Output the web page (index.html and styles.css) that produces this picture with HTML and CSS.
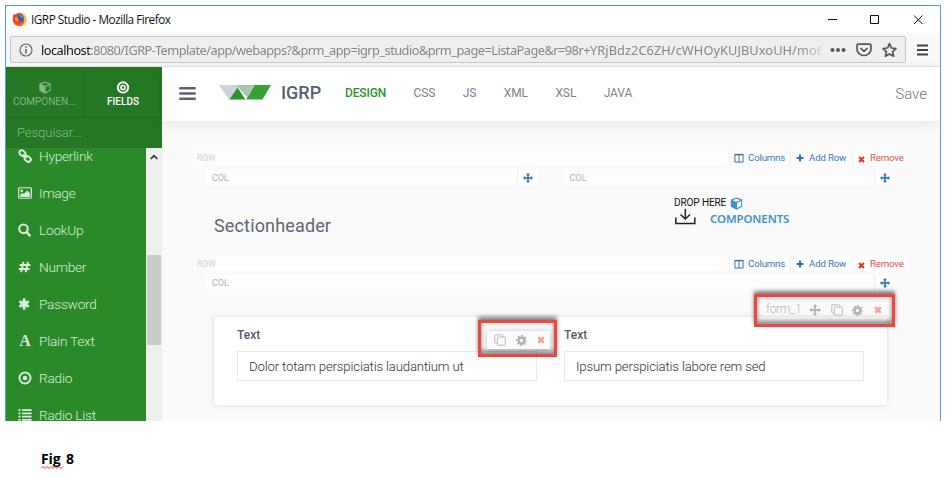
FILE: index.html
```html
<!DOCTYPE html>
<html lang="en">
<head>
<meta charset="utf-8">
<title>IGRP Studio</title>
<link rel="stylesheet" href="styles.css">
</head>
<body>
<svg class="defs" aria-hidden="true">
  <symbol id="cube" viewBox="0 0 16 16"><path fill="currentColor" fill-rule="evenodd" d="M8 .5 15 3.2V12L8 15.7 1 12V3.200zM8 2 3.200 3.900 8 5.800l4.800-1.900zM8.700 7.200v6.400l5-2.600V5.200z"/></symbol>
  <symbol id="target" viewBox="0 0 16 16"><circle cx="8" cy="8" r="6.300" fill="none" stroke="currentColor" stroke-width="2.200"/><circle cx="8" cy="8" r="2.600" fill="currentColor"/></symbol>
  <symbol id="ring" viewBox="0 0 16 16"><circle cx="8" cy="8" r="6.400" fill="none" stroke="currentColor" stroke-width="2.400"/><circle cx="8" cy="8" r="2.500" fill="none" stroke="currentColor" stroke-width="2"/></symbol>
  <symbol id="bars" viewBox="0 0 16 16"><path fill="none" stroke="currentColor" stroke-width="2.300" stroke-linecap="round" d="M1.200 3h13.600M1.200 8h13.600M1.200 13h13.600"/></symbol>
  <symbol id="move" viewBox="0 0 16 16"><path fill="currentColor" d="M8 0l3.200 3.500H9.200v3.300h3.300v-2L16 8l-3.500 3.200v-2H9.200v3.300h2L8 16l-3.200-3.500h2V9.200H3.500v2L0 8l3.500-3.200v2h3.300V3.500h-2z"/></symbol>
  <symbol id="copy" viewBox="0 0 16 16"><g fill="none" stroke="currentColor" stroke-width="1.200"><rect x="4.600" y="4" width="10.400" height="11" rx="1"/><path d="M4.600 12H2a1 1 0 0 1-1-1V2a1 1 0 0 1 1-1h8.500a1 1 0 0 1 1 1v2"/></g></symbol>
  <symbol id="gear" viewBox="0 0 16 16"><circle cx="8" cy="8" r="4.200" fill="none" stroke="currentColor" stroke-width="3.600"/><circle cx="8" cy="8" r="6.600" fill="none" stroke="currentColor" stroke-width="2.600" stroke-dasharray="2.900 2.284" stroke-dashoffset="1.450"/></symbol>
  <symbol id="cross" viewBox="0 0 16 16"><path fill="none" stroke="currentColor" stroke-width="5" d="M2.500 2.500l11 11M13.500 2.500l-11 11"/></symbol>
  <symbol id="plus" viewBox="0 0 16 16"><path fill="none" stroke="currentColor" stroke-width="4" d="M8 1v14M1 8h14"/></symbol>
  <symbol id="columns" viewBox="0 0 16 16"><path fill="none" stroke="currentColor" stroke-width="1.500" d="M1.500 2.500h13v12h-13zM8 2.500v12"/><path stroke="currentColor" stroke-width="2.200" d="M1 2.500h14"/></symbol>
</svg>

<main class="window">
  <header class="titlebar">
    <svg class="firefox" viewBox="0 0 16 16"><circle cx="8" cy="8" r="7.300" fill="#f05a28"/><path fill="#ffbd2f" d="M10 .8c3 1 5.600 4 5.300 7.700C15 12.600 11.700 15.400 8 15.400c3.800-1.500 5.500-4 5-7C12.600 5.500 10.500 4 10 .8z"/><circle cx="8.300" cy="7" r="4.300" fill="#3157b7"/><path fill="#2ba6df" d="M7 2.800c3 0 4.700 1.600 5 4L9.500 6z"/><path fill="#f23b31" d="M1 3.500 3 2l.8 2 3 .6L6 6.600l2 1.700-1.300 1.500 4.700-.6c-1 3-4.300 4.200-6.700 2.800C1.500 10.500.2 7 1 3.500z"/><path fill="#ff9524" d="M3 5.500 6.500 5 5.500 7l2 1.500-2 1.400C3.600 9.800 2.500 8 3 5.500z"/></svg>
    <span class="window-title">IGRP Studio - Mozilla Firefox</span>
    <svg class="controls" viewBox="0 0 102 12"><g fill="none" stroke="#111"><path d="M3 5.500h9M45.500 1.500h8v8h-8zM89 1.500l8.500 8.500M97.500 1.500l-8.500 8.500"/></g></svg>
  </header>
  <div class="toolbar">
    <div class="urlbar">
      <svg class="info" viewBox="0 0 14 14"><circle cx="7" cy="7" r="6" fill="none" stroke="#666" stroke-width="1.200"/><path stroke="#666" stroke-width="1.600" d="M7 6v4.500M7 3.200v1.600"/></svg>
      <div class="url"><b>localhost</b>:8080/IGRP-Template/app/webapps?&amp;prm_app=igrp_studio&amp;prm_page=ListaPage&amp;r=98r+<span class="token">YRjBdz2C6ZH/cWHOyKUJBUxoUH/mo6</span></div>
      <svg class="url-icons" viewBox="0 0 68 16"><g fill="#555"><circle cx="2.500" cy="8" r="2"/><circle cx="8" cy="8" r="2"/><circle cx="13.500" cy="8" r="2"/></g><g fill="none" stroke="#555" stroke-width="1.700" stroke-linejoin="round" stroke-linecap="round"><path d="M28.500 2.200h11q1.500 0 1.500 1.500V7a7 6.500 0 0 1-14 0V3.700q0-1.500 1.500-1.500zM31 6.500l3 2.800 3-2.800"/><path d="M59.500 1.700l1.900 4.300 4.600.5-3.400 3.100 1 4.700-4.100-2.400-4.100 2.400 1-4.700L53 6.500l4.600-.5z"/></g></svg>
    </div>
    <svg class="menu" viewBox="0 0 12 12"><path stroke="#444" stroke-width="1.800" d="M0 1.500h11M0 6h11M0 10.500h11"/></svg>
  </div>

  <div class="app">
    <aside class="sidebar">
      <nav class="tabs">
        <a class="tab"><svg><use href="#cube"/></svg><span>COMPONEN...</span></a>
        <a class="tab active"><svg><use href="#ring"/></svg><span>FIELDS</span></a>
      </nav>
      <div class="search">Pesquisar...</div>
      <div class="list-area">
        <ul class="fields">
          <li><svg viewBox="0 0 16 16"><g fill="none" stroke="currentColor" stroke-width="2.200"><rect x="1.300" y="2" width="7.500" height="5.400" rx="2.500" transform="rotate(42 5 4.700)"/><rect x="7.400" y="8.500" width="7.500" height="5.400" rx="2.500" transform="rotate(42 11 11.200)"/><path d="M6 6l4 4"/></g></svg>Hyperlink</li>
          <li><svg viewBox="0 0 16 16"><rect x=".8" y="2" width="14.400" height="12" rx="1" fill="none" stroke="currentColor" stroke-width="1.400"/><circle cx="4.300" cy="5.500" r="1.500" fill="currentColor"/><path fill="currentColor" d="M2.500 12.500v-2.300L5 7.700l1.500 1.500 4-4 3 3v4.300z"/></svg>Image</li>
          <li><svg viewBox="0 0 16 16"><circle cx="6.300" cy="6.700" r="4.900" fill="none" stroke="currentColor" stroke-width="2.300"/><path stroke="currentColor" stroke-width="2.800" stroke-linecap="round" d="M10.300 10.800l3 3.300"/></svg>LookUp</li>
          <li><svg viewBox="0 0 16 16"><path fill="none" stroke="currentColor" stroke-width="2.200" d="M6.200 2 3.600 14M11.400 2 8.800 14M1.800 5.700h12.400M.8 10.300h12.400"/></svg>Number</li>
          <li><svg viewBox="0 0 16 16"><path stroke="currentColor" stroke-width="3.300" stroke-linecap="round" d="M7 3v10M2.800 5.600l8.400 4.800M11.200 5.600l-8.400 4.800"/></svg>Password</li>
          <li><i class="letter">A</i>Plain Text</li>
          <li><svg><use href="#target"/></svg>Radio</li>
          <li><svg viewBox="0 0 16 16"><path fill="none" stroke="currentColor" stroke-width="2" d="M.5 2.500h2.500M4.500 2.500h11M.5 6.200h2.500M4.500 6.200h11M.5 9.900h2.500M4.500 9.900h11M.5 13.600h2.500M4.500 13.600h11"/></svg>Radio List</li>
        </ul>
        <div class="scrollbar"><svg class="arrow" viewBox="0 0 8 6"><path fill="none" stroke="#333" stroke-width="1.700" d="M.7 5 4 1.600 7.300 5"/></svg><div class="thumb"></div></div>
      </div>
    </aside>

    <section class="workspace">
      <header class="app-header">
        <svg class="burger"><use href="#bars"/></svg>
        <svg class="logo" viewBox="0 0 52 15"><path fill="#cdd4dc" d="M0 0h17l4 6-5 8.500H10z"/><path fill="#a5c4b2" d="M17 0h18l-7 12z"/><path fill="#2b952b" d="M18.500 2.500 26.500 14.500h-16z"/><path fill="#36a136" d="M35.500 0H52L43.500 14.500H27z"/></svg>
        <span class="brand">IGRP</span>
        <nav class="modes"><a class="on">DESIGN</a><a>CSS</a><a>JS</a><a>XML</a><a>XSL</a><a>JAVA</a></nav>
        <span class="save">Save</span>
      </header>
      <div class="canvas">
        <div class="row-bar"><span class="row-name">ROW</span><span class="act act-columns"><svg><use href="#columns"/></svg>Columns</span><span class="act act-add"><svg><use href="#plus"/></svg>Add Row</span><span class="act remove"><svg><use href="#cross"/></svg>Remove</span></div>
        <div class="cols">
          <div class="col-bar"><span>COL</span><i><svg><use href="#move"/></svg></i></div>
          <div class="col-bar"><span>COL</span><i><svg><use href="#move"/></svg></i></div>
        </div>
        <div class="cols body-cols">
          <h2>Sectionheader</h2>
          <div class="drop">
            <div class="drop-line"><span>DROP HERE</span><svg class="drop-cube"><use href="#cube"/></svg></div>
            <div class="drop-line"><svg class="tray" viewBox="0 0 21 16"><path fill="none" stroke="#222" stroke-width="1.500" d="M.8 8.500v6h19v-6M10.300 0v9.500M5.500 5.500l4.800 4.500 4.800-4.500"/></svg><strong>COMPONENTS</strong></div>
          </div>
        </div>
        <div class="row-bar"><span class="row-name">ROW</span><span class="act act-columns"><svg><use href="#columns"/></svg>Columns</span><span class="act act-add"><svg><use href="#plus"/></svg>Add Row</span><span class="act remove"><svg><use href="#cross"/></svg>Remove</span></div>
        <div class="cols cols-single">
          <div class="col-bar"><span>COL</span><i><svg><use href="#move"/></svg></i></div>
        </div>
        <div class="form">
          <div class="field"><label>Text</label><div class="input">Dolor totam perspiciatis laudantium ut</div>
            <div class="mark field-mark"><div class="tools"><svg class="copy"><use href="#copy"/></svg><svg class="gear"><use href="#gear"/></svg><svg class="cross"><use href="#cross"/></svg></div></div>
          </div>
          <div class="field"><label>Text</label><div class="input">Ipsum perspiciatis labore rem sed</div></div>
          <div class="mark form-mark"><span>form_1</span><svg class="move"><use href="#move"/></svg><svg class="copy"><use href="#copy"/></svg><svg class="gear"><use href="#gear"/></svg><svg class="cross"><use href="#cross"/></svg></div>
        </div>
      </div>
    </section>
  </div>
</main>
<p class="caption"><span>Fig</span> 8<svg class="squiggle" viewBox="0 0 23 3"><path fill="none" stroke="#f33" d="M0 2.500l2-2 2 2 2-2 2 2 2-2 2 2 2-2 2 2 2-2 2 2 2-2"/></svg></p>
</body>
</html>
```
FILE: styles.css
```css
* { box-sizing: border-box; }
body { margin: 0; height: 477px; overflow: hidden; background: #fff; font-family: Roboto, "Liberation Sans", sans-serif; }
svg { display: block; flex: none; }
.defs { position: absolute; width: 0; height: 0; }
.window { margin: 5px 0 0 5px; width: 936px; height: 416px; border: 1px solid #4b9fe2; border-bottom: 0; background: #fafafa; overflow: hidden; }

.titlebar { height: 27px; display: flex; align-items: center; background: #fff; padding: 0 16px 0 6px; }
.firefox { width: 15px; height: 15px; }
.window-title { margin: -1px 0 0 4px; font: 11.800px "Open Sans", sans-serif; letter-spacing: -.5px; color: #111; white-space: nowrap; }
.controls { width: 102px; height: 12px; margin-left: auto; margin-right: -3px; }
.toolbar { height: 34px; display: flex; align-items: center; padding: 0 12px 0 4px; background: #f8f8f8; border-bottom: 1px solid #e2e2e2; }
.urlbar { width: 896px; height: 27px; border: 1px solid #c6c6c6; border-radius: 2px; background: #efefef; display: flex; align-items: center; padding: 0 7px 0 8px; }
.info { width: 14px; height: 14px; }
.url { margin-left: 8px; width: 786px; font: 12.800px "Noto Sans", sans-serif; letter-spacing: -.53px; color: #858585; white-space: nowrap; overflow: hidden; -webkit-mask-image: linear-gradient(90deg, #000 755px, transparent 792px); }
.url b { font-weight: 400; color: #111; }
.token { letter-spacing: .06px; }
.url-icons { width: 68px; height: 16px; margin-left: 9px; }
.menu { width: 12px; height: 12px; margin-left: 11px; }

.app { display: flex; height: 355px; }
.sidebar { width: 156px; display: flex; flex-direction: column; background: #2a8a2a; }
.tabs { height: 51px; display: flex; background: #257725; border-bottom: 1px solid #206d20; flex: none; }
.tab { width: 77px; display: flex; flex-direction: column; align-items: center; padding-top: 14px; font-size: 10px; line-height: 12px; color: #83b583; letter-spacing: 0; }
.tab + .tab { width: 79px; border-left: 1px solid #206d20; }
.tab svg { width: 14px; height: 13px; margin-bottom: 2px; }
.tab.active { color: #fff; font-weight: 500; }
.search { height: 30px; flex: none; background: #257725; padding-left: 11px; font-size: 13px; font-weight: 300; line-height: 30px; color: #8dbb8d; letter-spacing: -.05px; }
.list-area { flex: 1; min-height: 0; display: flex; overflow: hidden; }
.fields { list-style: none; margin: -11px 0 0; padding: 0; width: 140px; }
.fields li { height: 37.1px; display: flex; align-items: center; padding-left: 12px; font-size: 13.700px; font-weight: 300; letter-spacing: -.25px; color: #d9efd9; white-space: nowrap; }
.fields svg { width: 14px; height: 14px; margin-right: 7px; }
.letter { width: 14px; margin-right: 7px; font: bold 16px "Liberation Serif", serif; text-align: center; }
.scrollbar { width: 16px; background: #efefef; padding: 6px 1px 0 1px; height: 273px; }
.arrow { width: 8px; height: 6px; margin-left: 3px; }
.thumb { height: 90px; margin-top: 95px; background: #cbcbcb; }

.workspace { width: 778px; }
.app-header { height: 54px; background: #fff; display: flex; align-items: center; padding: 0 13px 0 17px; box-shadow: 0 3px 12px rgba(0,0,0,.08); }
.burger { width: 17px; height: 17px; color: #596273; margin-top: -2px; }
.logo { width: 52px; height: 15px; margin-left: 23px; margin-top: -4px; }
.brand { margin-left: 10px; width: 42px; font-size: 18px; font-weight: 500; color: #56606f; margin-top: -4px; letter-spacing: 0; }
.modes { display: flex; margin-left: 22px; margin-top: -3px; gap: 27.400px; font-size: 12px; color: #7b828d; letter-spacing: -.07px; }
.modes .on { color: #2e922e; font-weight: 500; letter-spacing: -.15px; }
.save { margin-left: auto; font-size: 15px; font-weight: 300; color: #777; }

.canvas { padding: 29px 33px 0 32px; }
.row-bar { height: 15px; width: 714px; display: flex; align-items: center; background: #fdfdfd; font-size: 9.700px; color: #3b78b4; }
.row-name { width: 535px; padding-left: 3px; font-size: 8.500px; color: #d3d0d0; }
.act { height: 15px; display: flex; align-items: center; gap: 4px; border-left: 1px solid #efefef; padding-left: 4px; white-space: nowrap; letter-spacing: -.18px; }
.act svg { width: 10px; height: 10px; margin-top: 1px; color: #2b6faf; }
.act-columns { width: 61px; }
.act-add { width: 62px; gap: 5px; padding-left: 5px; }
.act.remove { color: #df5545; letter-spacing: -.2px; gap: 5px; }
.act.remove svg { width: 7px; height: 7px; color: #d83b2b; margin: 3px 0 0 1px; }
.act.act-add svg { width: 8px; height: 8px; margin-top: 1px; }
.cols { display: flex; margin: 5px 0 0 12px; width: 689px; gap: 26px; }
.cols-single { margin-top: 4px; }
.col-bar { flex: 1; height: 15px; display: flex; align-items: center; justify-content: space-between; background: #fdfdfd; padding-left: 6px; font-size: 9px; color: #b4b4b4; }
.col-bar i { width: 21px; height: 15px; border-left: 1px solid #ececec; display: flex; align-items: center; justify-content: center; color: #2b6faf; }
.col-bar i svg { width: 10px; height: 10px; }
.body-cols { margin-top: 0; height: 71px; gap: 0; }
h2 { margin: 30px 0 0 8px; width: 460px; font-size: 18px; line-height: 22px; font-weight: 400; letter-spacing: .15px; color: #5e6672; }
.drop { padding-top: 10px; }
.drop-line { display: flex; align-items: center; font-size: 10px; line-height: 12px; letter-spacing: -.1px; color: #111; }
.drop-cube { width: 13px; height: 13px; margin: 2px 0 0 4px; color: #3f94c5; }
.tray { width: 21px; height: 16px; margin: -2px 0 0 1px; }
.drop strong { margin: 2px 0 0 14px; font: 600 11.500px/14px "Noto Sans", sans-serif; letter-spacing: -.12px; color: #3f94c5; }

.form { position: relative; width: 673px; height: 88px; margin: 27px 0 0 20px; padding: 10px 23px; display: flex; gap: 27px; background: #fff; box-shadow: 0 0 5px rgba(0,0,0,.13); }
.field { position: relative; width: 300px; }
.field label { display: block; height: 24px; font-size: 12px; line-height: 16px; font-weight: 500; color: #515b68; }
.input { height: 30px; border: 1px solid #e8e8e8; padding-left: 11px; font-size: 13.200px; line-height: 29px; font-weight: 300; letter-spacing: -.17px; color: #333; }
.mark { position: absolute; display: flex; align-items: center; border: 3px solid #eb4840; box-shadow: 0 -3px 4px rgba(0,0,0,.5), inset 0 -4px 4px rgba(0,0,0,.4), inset 0 2px 4px rgba(0,0,0,.15); color: #b4b4b4; }
.mark svg { width: 12px; height: 12px; }
.mark .cross { width: 8px; height: 8px; color: #efa69e; }
.mark .gear { width: 11px; height: 11px; }
.field-mark { left: 241px; top: -7px; width: 79px; height: 37px; padding-left: 6px; }
.tools { width: 63px; height: 18px; margin-top: 3px; display: flex; align-items: center; padding-left: 7px; background: #fcfcfc; box-shadow: 0 0 5px rgba(0,0,0,.25); }
.tools .gear { margin-left: 10px; }
.tools .cross { margin-left: 10px; }
.form-mark { left: 540px; top: -23px; width: 141px; height: 33px; padding-left: 9px; font-size: 12px; font-weight: 300; letter-spacing: -.3px; color: #b4b4b4; }
.form-mark span { width: 43px; margin-top: -4px; }
.form-mark svg { margin-top: -1px; }
.form-mark .copy { margin-left: 10px; }
.form-mark .gear { margin-left: 9px; }
.form-mark .cross { margin-left: 11px; }

.caption { position: relative; width: max-content; margin: 28px 0 0 41px; font: bold 14px/20px "Open Sans", sans-serif; letter-spacing: -.1px; word-spacing: 2px; color: #000; }
.squiggle { position: absolute; left: 0; top: 17px; width: 23px; height: 3px; }
```
